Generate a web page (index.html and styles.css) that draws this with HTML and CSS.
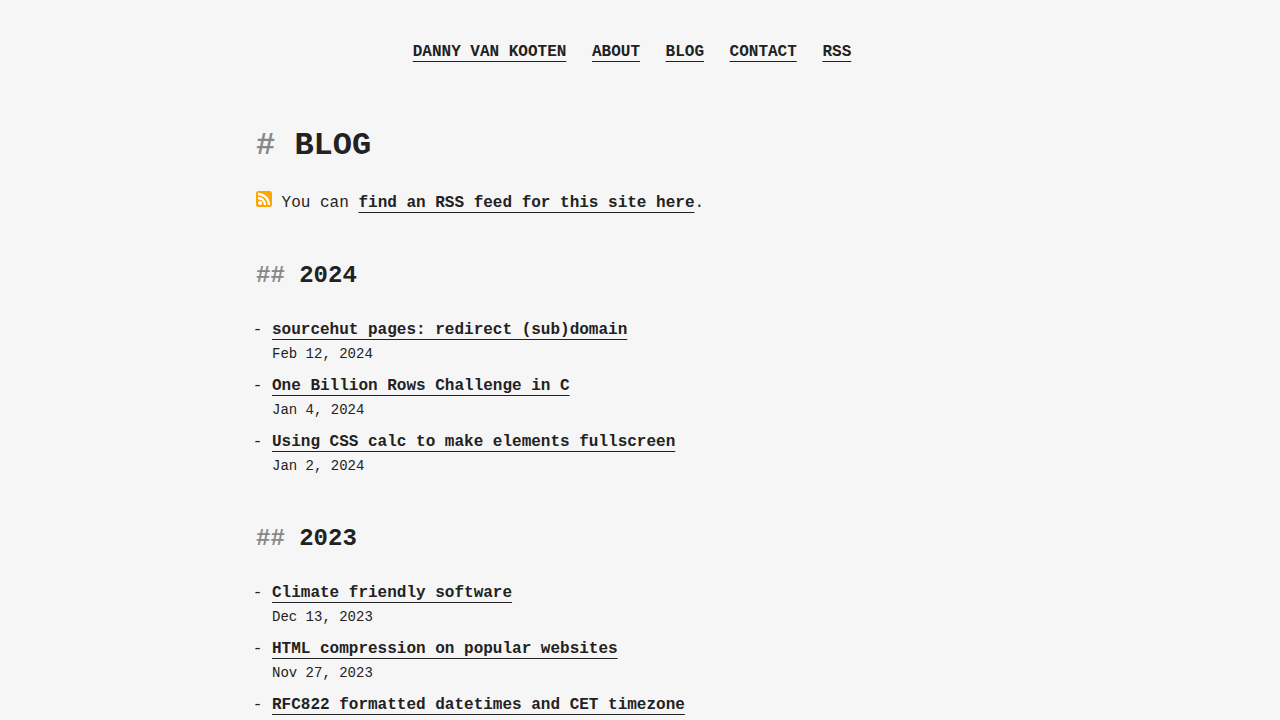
FILE: index.html
```html
<!DOCTYPE html>
<html lang="en">
<head>
    <meta charset="UTF-8">
    <meta name="viewport" content="width=device-width, initial-scale=1.0">
    <title>Blog - Danny van Kooten</title>
    <link rel="stylesheet" href="styles.css">
</head>
<body>
    <nav class="site-nav">
        <a href="/">Danny van Kooten</a>
        <a href="/about">About</a>
        <a href="/blog">Blog</a>
        <a href="/contact">Contact</a>
        <a href="/feed.xml">RSS</a>
    </nav>
    <main class="content">
        <h1>Blog</h1>
        <p>
            <svg class="rss-icon" width="16" height="16" viewBox="0 0 16 16" aria-hidden="true">
                <rect width="16" height="16" rx="2.5" fill="orange"/>
                <circle cx="4" cy="12" r="2.1" fill="#fff"/>
                <path d="M2 7a7 7 0 0 1 7 7M2 3a11 11 0 0 1 11 11" fill="none" stroke="#fff" stroke-width="2.3"/>
            </svg>
            You can <a href="/feed.xml">find an RSS feed for this site here</a>.
        </p>

        <h2>2024</h2>
        <ul class="posts">
            <li><a href="/blog/sourcehut-pages">sourcehut pages: redirect (sub)domain</a><time datetime="2024-02-12">Feb 12, 2024</time></li>
            <li><a href="/blog/1brc">One Billion Rows Challenge in C</a><time datetime="2024-01-04">Jan 4, 2024</time></li>
            <li><a href="/blog/css-calc">Using CSS calc to make elements fullscreen</a><time datetime="2024-01-02">Jan 2, 2024</time></li>
        </ul>

        <h2>2023</h2>
        <ul class="posts">
            <li><a href="/blog/climate-friendly-software">Climate friendly software</a><time datetime="2023-12-13">Dec 13, 2023</time></li>
            <li><a href="/blog/html-compression">HTML compression on popular websites</a><time datetime="2023-11-27">Nov 27, 2023</time></li>
            <li><a href="/blog/rfc822-datetimes">RFC822 formatted datetimes and CET timezone</a></li>
        </ul>
    </main>
</body>
</html>
```
FILE: styles.css
```css
body {
    margin: 0;
    padding: 40px 16px 0;
    background: #f6f6f6;
    color: #222;
    font-family: "Liberation Mono", monospace;
    font-size: 16px;
    line-height: 24px;
}
a {
    color: #222;
    font-weight: bold;
    text-decoration: underline;
    text-decoration-thickness: 1px;
    text-decoration-skip-ink: none;
    text-underline-offset: 5px;
}
.site-nav {
    margin-bottom: 58px;
    text-align: center;
    text-transform: uppercase;
}
.site-nav a {
    margin-right: 16px;
}
.content {
    max-width: 768px;
    margin: 0 auto;
}
h1, h2 {
    margin: 0;
}
h1::before, h2::before {
    color: #888;
}
h1 {
    font-size: 32px;
    line-height: 48px;
    margin-bottom: 21px;
    text-transform: uppercase;
}
h1::before {
    content: "# ";
}
h2 {
    font-size: 24px;
    line-height: 36px;
    margin: 43px 0 24px;
}
h2::before {
    content: "## ";
}
p {
    margin: 0;
}
.posts {
    margin: 0;
    padding-left: 16px;
    list-style-type: "- ";
}
.posts li {
    margin-bottom: 8px;
}
.posts time {
    display: block;
    font-size: 14px;
}
```
